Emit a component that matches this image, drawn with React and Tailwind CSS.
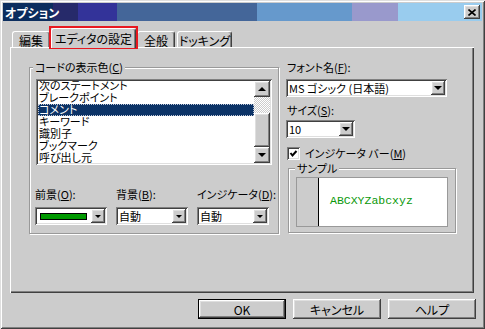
import React from "react";

const raised =
  "shadow-[inset_-1px_-1px_0_#404040,inset_1px_1px_0_#ffffff,inset_-2px_-2px_0_#808080,inset_2px_2px_0_#dfdfdf]";
const sunken =
  "shadow-[inset_1px_1px_0_#808080,inset_-1px_-1px_0_#ffffff,inset_2px_2px_0_#404040,inset_-2px_-2px_0_#dfdfdf]";
const etched = "border border-[#999999] shadow-[inset_1px_1px_0_#ffffff,1px_1px_0_#ffffff]";

const DownArrow = ({ big }) => (
  <div
    className={
      big
        ? "w-0 h-0 border-x-4 border-x-transparent border-t-4 border-t-black"
        : "w-0 h-0 border-x-[3px] border-x-transparent border-t-[3px] border-t-black"
    }
  />
);

const Combo = ({ className, big, children }) => (
  <div className={`flex h-[18px] bg-white p-[2px] ${sunken} ${className}`}>
    <div className="flex-1 flex items-center overflow-hidden whitespace-nowrap">{children}</div>
    <div className={`w-[14px] h-full flex items-center justify-center bg-[#cccccc] ${raised}`}>
      <DownArrow big={big} />
    </div>
  </div>
);

const Tab = ({ label, className, selected }) => (
  <div
    className={`flex items-center justify-center whitespace-nowrap rounded-t-[3px] border-l border-t border-white border-r border-r-[#404040] shadow-[inset_-1px_0_0_#808080] bg-[#cccccc] ${
      selected ? "relative z-10 h-[20px] -mb-px" : "h-[16px] pt-px"
    } ${className}`}
  >
    {label}
  </div>
);

const Button = ({ label, isDefault }) => (
  <div
    className={`w-[88px] h-[20px] flex items-center justify-center bg-[#cccccc] ${
      isDefault ? "border border-black" : ""
    }`}
  >
    <div className={`w-full h-full flex items-center justify-center ${raised}`}>{label}</div>
  </div>
);

const items = ["次のステートメント", "ブレークポイント", "コメント", "キーワード", "識別子", "ブックマーク", "呼び出し元"];

export default function App() {
  return (
    <div className="relative w-[485px] h-[329px] bg-[#cccccc] p-[3px] shadow-[inset_1px_1px_0_#dfdfdf,inset_-1px_-1px_0_#404040,inset_2px_2px_0_#ffffff,inset_-2px_-2px_0_#808080] font-['Noto_Sans_CJK_JP',sans-serif] text-[11px] leading-[13px] text-black [font-feature-settings:'palt']">
      {/* title bar */}
      <div className="h-[18px] flex items-center justify-between bg-[linear-gradient(90deg,#0b2d5e_0px,#0b2d5e_50px,#262a6a_50px,#262a6a_75px,#333399_75px,#333399_114px,#446699_114px,#446699_254px,#6699cc_254px,#6699cc_349px,#9999cc_349px,#9999cc_395px,#99ccee_395px)]">
        <span className="pl-[2px] text-white font-bold text-[12px]">オプション</span>
        <div className={`mr-[2px] w-[16px] h-[14px] flex items-center justify-center bg-[#cccccc] ${raised}`}>
          <svg width="8" height="7" viewBox="0 0 8 7">
            <path d="M0.5 0.5 L7.5 6.5 M7.5 0.5 L0.5 6.5" stroke="black" strokeWidth="1.6" />
          </svg>
        </div>
      </div>

      {/* tabs */}
      <div className="mt-[7px] h-[19px] flex items-end pl-[9px] text-[12px]">
        <Tab label="編集" className="w-[38px]" />
        <Tab label="エディタの設定" className="ml-px w-[85px]" selected />
        <Tab label="全般" className="ml-px w-[38px]" />
        <Tab label="ドッキング" className="ml-[2px] w-[55px]" />
      </div>

      {/* panel */}
      <div className="ml-[7px] w-[464px] h-[246px] flex items-start shadow-[inset_1px_1px_0_#ffffff,inset_-1px_-1px_0_#404040,inset_-2px_-2px_0_#808080]">
        {/* left group */}
        <div className={`relative ml-[19px] mt-[20px] w-[250px] h-[167px] pl-[6px] pt-[11px] ${etched}`}>
          <span className="absolute left-[3px] -top-[8px] px-[2px] bg-[#cccccc] leading-[14px] whitespace-nowrap">
            コードの表示色(<u>C</u>)
          </span>
          <div className={`w-[236px] h-[86px] bg-white p-[2px] flex ${sunken}`}>
            <div className="flex-1 overflow-hidden">
              <div className="-mt-px">
                {items.map((t, i) => (
                  <div
                    key={t}
                    className={`h-[12px] leading-[11px] pl-px whitespace-nowrap ${
                      i === 2 ? "bg-[#0c3366] text-white outline-1 outline-dotted outline-[#c0c8d8] -outline-offset-1" : ""
                    }`}
                  >
                    {t}
                  </div>
                ))}
              </div>
            </div>
            <div className="w-[16px] flex flex-col">
              <div className={`h-[16px] flex items-center justify-center bg-[#cccccc] ${raised}`}>
                <div className="w-0 h-0 border-x-4 border-x-transparent border-b-4 border-b-black" />
              </div>
              <div className="h-[16px] bg-[repeating-conic-gradient(#ffffff_0%_25%,#cccccc_0%_50%)] bg-[length:2px_2px]" />
              <div className={`h-[34px] bg-[#cccccc] ${raised}`} />
              <div className={`h-[16px] flex items-center justify-center bg-[#cccccc] ${raised}`}>
                <DownArrow big />
              </div>
            </div>
          </div>
          <div className="mt-[22px] -ml-px flex gap-[9px] leading-[14px] whitespace-nowrap">
            <span className="w-[72px]">前景(<u>O</u>):</span>
            <span className="w-[72px]">背景(<u>B</u>):</span>
            <span className="w-[72px]">インジケータ(<u>D</u>):</span>
          </div>
          <div className="mt-[6px] -ml-px flex gap-[9px]">
            <Combo className="w-[72px]">
              <div className="ml-[3px] w-[47px] h-[7px] bg-[#009900] border border-black" />
            </Combo>
            <Combo className="w-[72px]">
              <span className="pl-px">自動</span>
            </Combo>
            <Combo className="w-[72px]">
              <span className="pl-px">自動</span>
            </Combo>
          </div>
        </div>

        {/* right column */}
        <div className="ml-[7px] mt-[14px] flex flex-col whitespace-nowrap">
          <span className="pl-px h-[13px]">フォント名(<u>F</u>):</span>
          <Combo className="mt-[5px] w-[161px]" big>
            <span className="pl-px">MS ゴシック (日本語)</span>
          </Combo>
          <span className="mt-[7px] pl-px h-[13px]">サイズ(<u>S</u>):</span>
          <Combo className="mt-[3px] w-[69px]" big>
            <span className="pl-px">10</span>
          </Combo>
          <div className="mt-[9px] ml-px flex items-center h-[13px]">
            <div className={`w-[13px] h-[13px] bg-white flex items-center justify-center ${sunken}`}>
              <svg width="9" height="9" viewBox="0 0 9 9">
                <polyline points="1.5,4 3.5,6.5 7.5,2" fill="none" stroke="black" strokeWidth="2" />
              </svg>
            </div>
            <span className="ml-[5px]">インジケータ バー(<u>M</u>)</span>
          </div>
          <div className={`relative mt-[8px] ml-[2px] w-[168px] h-[65px] pl-[7px] pt-[8px] ${etched}`}>
            <span className="absolute left-[6px] -top-[8px] px-[2px] bg-[#cccccc] leading-[14px]">サンプル</span>
            <div className="w-[152px] h-[50px] flex border border-[#999999]">
              <div className="w-[22px] bg-[#cccccc] border-r border-black" />
              <div className="flex-1 bg-white flex items-center pl-[11px] pb-[3px] font-['Liberation_Mono',monospace] text-[11.5px] text-[#0a990a]">
                ABCXYZabcxyz
              </div>
            </div>
          </div>
        </div>
      </div>

      {/* buttons */}
      <div className="mt-[6px] flex justify-end gap-[7px] pr-[6px] text-[12px]">
        <Button label="OK" isDefault />
        <Button label="キャンセル" />
        <Button label="ヘルプ" />
      </div>

      {/* annotation */}
      <div className="absolute left-[49px] top-[26px] w-[89px] h-[23px] border-2 border-[#e81820]" />
    </div>
  );
}
